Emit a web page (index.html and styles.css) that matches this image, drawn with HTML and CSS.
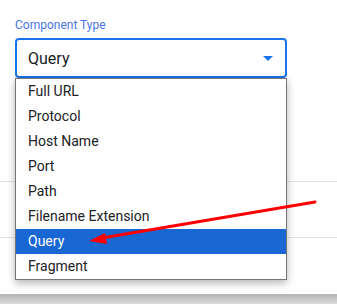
FILE: index.html
```html
<!DOCTYPE html>
<html lang="en">
<head>
    <meta charset="UTF-8">
    <meta name="viewport" content="width=device-width, initial-scale=1.0">
    <title>Component Type</title>
    <link rel="stylesheet" href="styles.css">
</head>
<body>

    <div class="card">
        <!-- Champ de sélection -->
        <div class="field">
            <label class="field-label">Component Type</label>
            <div class="select">
                <span class="select-value">Query</span>
                <span class="caret"></span>
            </div>
        </div>

        <!-- Lignes du formulaire derrière le menu -->
        <div class="rows">
            <div class="row"></div>
            <div class="row"></div>
        </div>

        <!-- Menu ouvert -->
        <ul class="menu">
            <li>Full URL</li>
            <li>Protocol</li>
            <li>Host Name</li>
            <li>Port</li>
            <li>Path</li>
            <li>Filename Extension</li>
            <li class="selected">Query</li>
            <li>Fragment</li>
        </ul>

        <svg class="pointer" width="337" height="304" viewBox="0 0 337 304">
            <line x1="315" y1="202" x2="102" y2="238" stroke="#ff0000" stroke-width="3" stroke-linecap="round"/>
            <polygon points="89,241 105,233 107,244" fill="#ff0000"/>
        </svg>
    </div>

    <div class="footer"></div>

</body>
</html>
```

FILE: styles.css
```css
body {
    margin: 0;
    font-family: Roboto, "Noto Sans", Arial, sans-serif;
    background: white;
    color: #202124;
}
.card {
    position: relative;
    height: 294px;
    padding: 0 15px;
    box-sizing: border-box;
}
.field { padding-top: 17px; }
.field-label {
    display: block;
    font-size: 12px;
    line-height: 16px;
    color: #4a74e6;
    margin-bottom: 5px;
}
.select {
    display: flex;
    align-items: center;
    justify-content: space-between;
    width: 272px;
    height: 40px;
    box-sizing: border-box;
    border: 2px solid #1a73e8;
    border-radius: 4px;
    padding: 0 12px 0 11px;
}
.select-value { font-size: 16px; }
.caret {
    width: 0;
    height: 0;
    border-left: 5px solid transparent;
    border-right: 5px solid transparent;
    border-top: 5px solid #1a73e8;
}
.rows { margin: 0 -15px; padding-top: 103px; }
.row { height: 55px; border-top: 1px solid #e3e3e3; }
.menu {
    position: absolute;
    top: 78px;
    left: 15px;
    width: 272px;
    box-sizing: border-box;
    margin: 0;
    padding: 0;
    list-style: none;
    background: white;
    border: 1px solid #757575;
    box-shadow: 0 3px 8px rgba(0, 0, 0, 0.3);
}
.menu li {
    height: 25px;
    line-height: 25px;
    padding-left: 12px;
    font-size: 14px;
}
.menu li.selected { background: #1967d2; color: white; }
.pointer { position: absolute; top: 0; left: 0; }
.footer {
    height: 10px;
    background: linear-gradient(#b3b3b3, #dadada);
}
```
